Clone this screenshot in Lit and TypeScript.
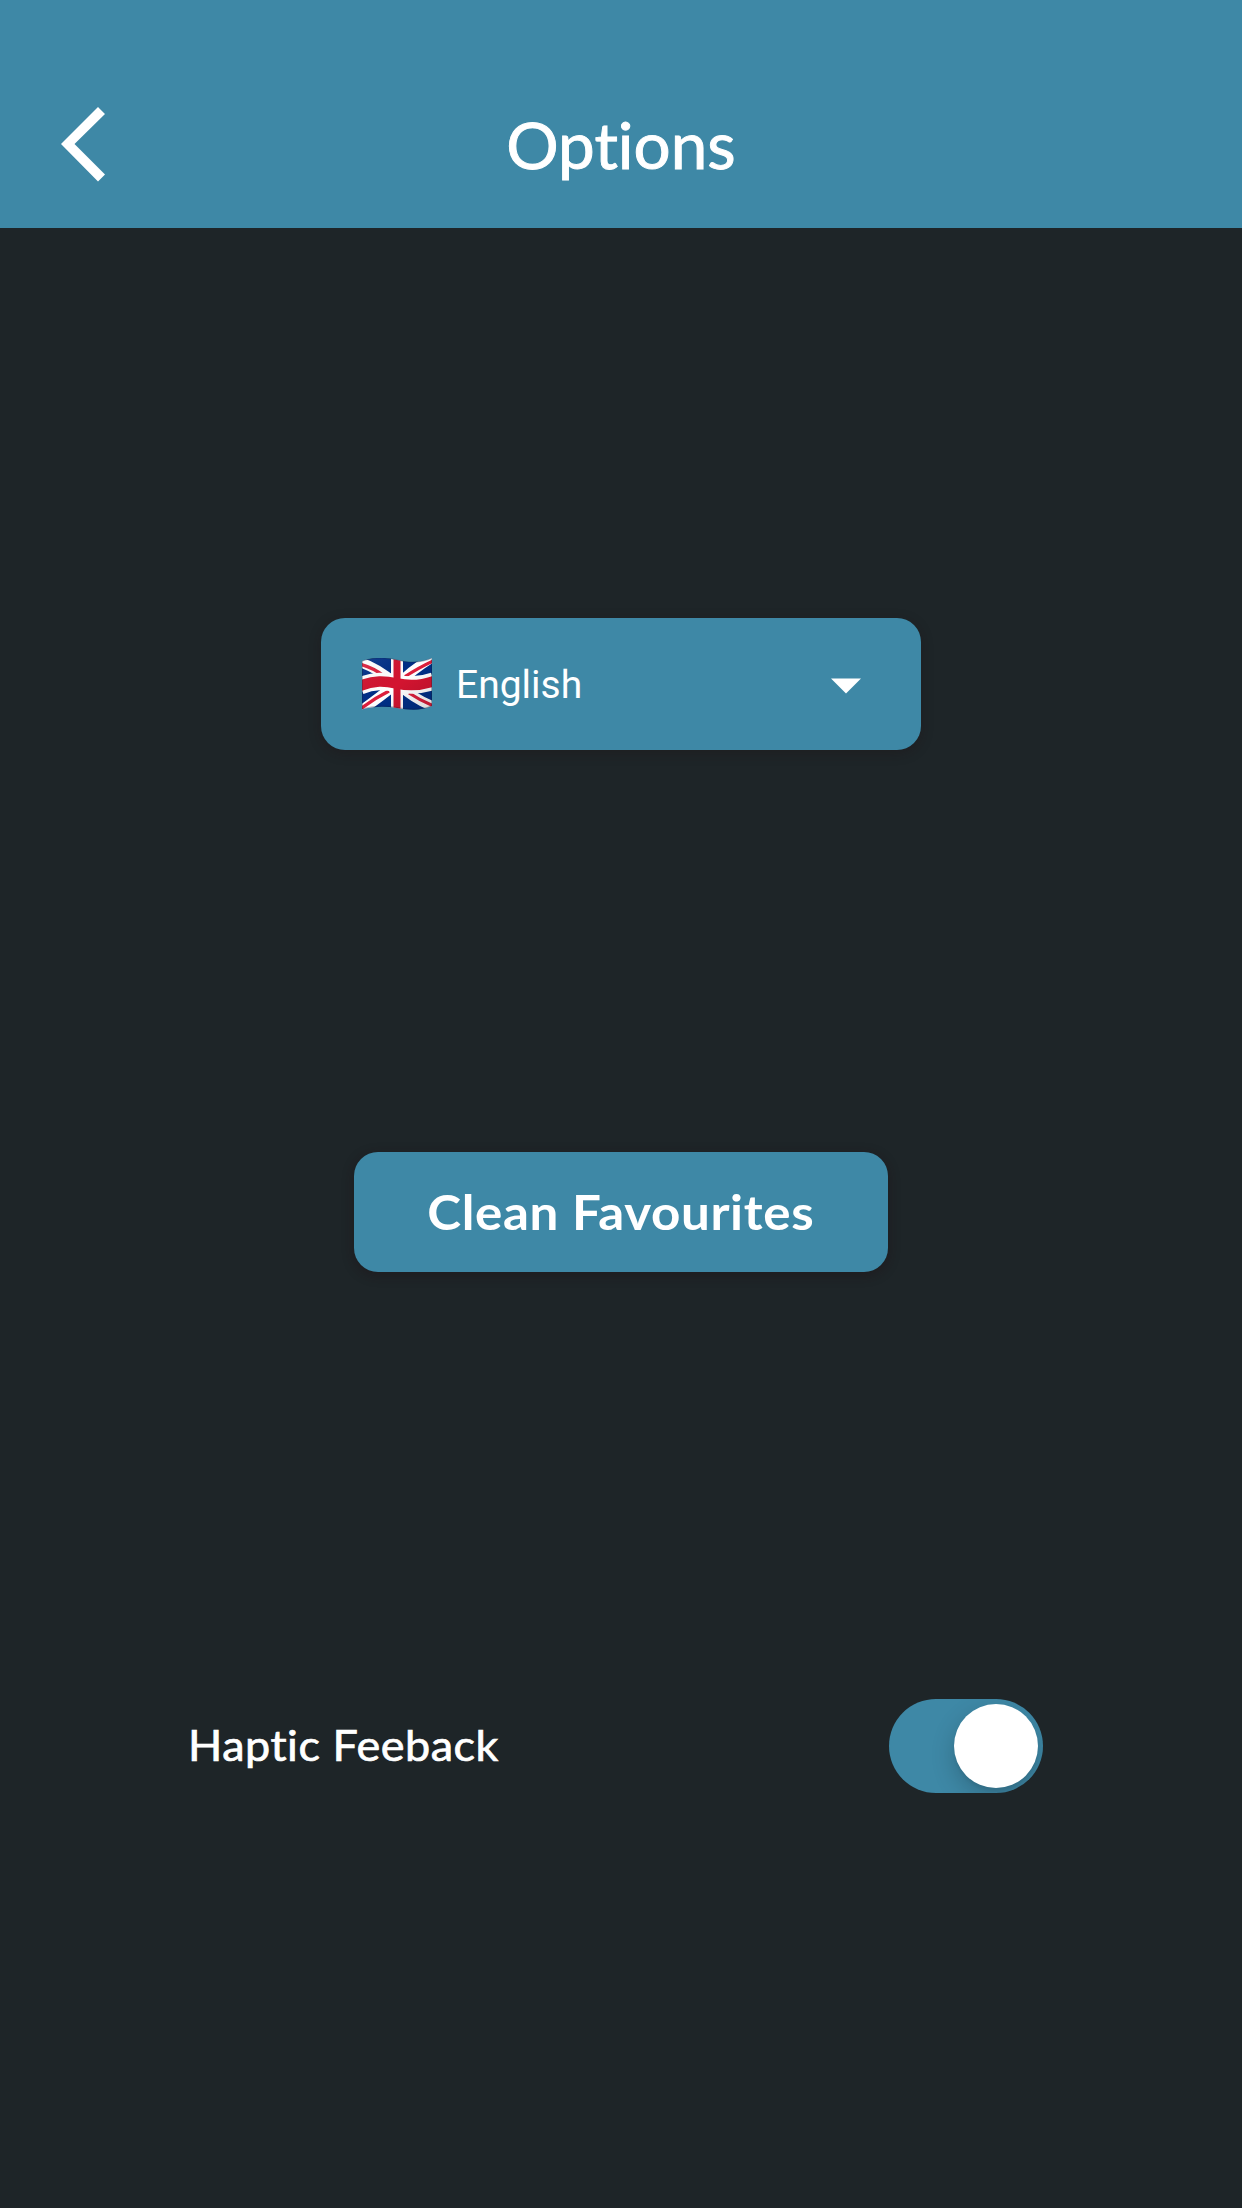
import { LitElement, html, css, svg } from "lit";
import { customElement, state } from "lit/decorators.js";

const flag = svg`
  <defs>
    <clipPath id="cloth"><path d="M0 3C12-1 23-1 35 2S58 5 70 0V48C58 53 47 52 35 50S12 48 0 51.500Z"/></clipPath>
    <linearGradient id="shade" x1="0" y1="0" x2="1" y2="1">
      <stop offset="0" stop-color="#fff" stop-opacity=".1"/>
      <stop offset=".5" stop-color="#000" stop-opacity="0"/>
      <stop offset="1" stop-color="#000" stop-opacity=".16"/>
    </linearGradient>
  </defs>
  <g clip-path="url(#cloth)">
    <path fill="#002f87" d="M-1-2H71V54H-1Z"/>
    <path stroke="#fff" stroke-width="10" fill="none" d="M-3 4Q14 9 33 25M73-2Q55 8 37 25M-3 54Q14 42 33 27M73 49Q55 43 37 27"/>
    <path stroke="#dc1f3c" stroke-width="3.200" fill="none" d="M-3 6Q10 9 22 18M71 3Q58 9 43 18.500M-1 50.500Q13 40 27 33M72 48Q59 43 47 35"/>
    <path stroke="#fff" stroke-width="17.500" fill="none" d="M-2 28C12 22 23 23 35 25.500S58 28 72 23"/>
    <path fill="#fff" d="M29-2H41V54H29Z"/>
    <path stroke="#d31430" stroke-width="10.500" fill="none" d="M-2 28C12 22 23 23 35 25.500S58 28 72 23"/>
    <path fill="#d31430" d="M31.500-2H38.500V54H31.500Z"/>
    <path fill="url(#shade)" d="M-1-2H71V54H-1Z"/>
  </g>
  <path fill="none" stroke="#123" stroke-opacity=".3" d="M.5 3C12-1 23-1 35 2S58 5 69.500 .5V48C58 52.500 47 51.500 35 49.500S12 47.500 .5 51Z"/>`;

@customElement("app-root")
export class AppRoot extends LitElement {
  @state() private haptic = true;

  static styles = css`
    :host { display: block; font-family: Lato, "Liberation Sans", sans-serif; font-variant-ligatures: none; color: #fff; }
    .page { box-sizing: border-box; width: 100%; height: 2208px; background: #1e2528; display: flex; flex-direction: column; align-items: center; overflow: hidden; }
    .header { box-sizing: border-box; width: 100%; height: 228px; flex: none; background: #3e88a6; display: grid; grid-template-columns: 180px 1fr 180px; align-items: center; padding-top: 60px; }
    button { appearance: none; border: 0; padding: 0; margin: 0; color: inherit; font: inherit; background: none; white-space: nowrap; }
    .back { margin-left: 60px; width: 46px; height: 76px; }
    .back svg, .flag, .caret { display: block; }
    h1 { margin: 1px 0 0; text-align: center; font-size: 63px; line-height: 76px; font-weight: 400; letter-spacing: 0; transform: scaleX(1.04); -webkit-text-stroke: .9px #fff; }
    .select { box-sizing: border-box; margin-top: 390px; width: 600px; height: 132px; padding: 0 60px 0 41px; border-radius: 24px; background: #3e88a6; box-shadow: 0 3px 12px rgba(32, 16, 20, .35); display: flex; align-items: center; }
    .language { font-family: Roboto, sans-serif; font-size: 39px; line-height: 46px; margin: 2px auto 0 24px; }
    .caret { margin-top: 3px; }
    .clean { margin-top: 402px; width: 534px; height: 120px; border-radius: 24px; background: #3e88a6; box-shadow: 0 3px 12px rgba(32, 16, 20, .45); font-size: 48px; font-weight: 700; line-height: 60px; }
    .clean span { display: inline-block; letter-spacing: .6px; transform: scaleX(1.065); }
    .row { margin: 427px 0 0 188px; align-self: flex-start; width: 855px; display: flex; justify-content: space-between; align-items: center; }
    .label { font-size: 42px; line-height: 52px; letter-spacing: .5px; transform: scaleX(1.07); transform-origin: left; margin-top: -3px; -webkit-text-stroke: .7px #fff; }
    .switch { box-sizing: border-box; width: 154px; height: 94px; border-radius: 47px; padding: 5px; background: #3e88a6; display: flex; justify-content: flex-start; overflow: hidden; }
    .switch.on { justify-content: flex-end; }
    .knob { width: 84px; height: 84px; border-radius: 50%; background: #fff; box-shadow: 0 9px 24px rgba(0, 0, 0, .2), 0 3px 3px rgba(0, 0, 0, .06); }
  `;

  render() {
    return html`
      <main class="page">
        <header class="header">
          <button class="back" aria-label="Back">
            <svg width="46" height="76" viewBox="0 0 46 76"><path fill="#fff" d="M38 1 45 8 14.500 38 45 68.500 38 75.500 1 38Z"/></svg>
          </button>
          <h1>Options</h1>
        </header>
        <button class="select">
          <svg class="flag" width="70" height="52" viewBox="0 0 70 52">${flag}</svg>
          <span class="language">English</span>
          <svg class="caret" width="30" height="16" viewBox="0 0 30 16"><path fill="#fff" d="M0 .5H30L15 15.500Z"/></svg>
        </button>
        <button class="clean"><span>Clean Favourites</span></button>
        <div class="row">
          <span class="label">Haptic Feeback</span>
          <button class="switch ${this.haptic ? "on" : ""}" role="switch" aria-label="Haptic Feeback" aria-checked=${this.haptic}
            @click=${() => (this.haptic = !this.haptic)}><span class="knob"></span></button>
        </div>
      </main>`;
  }
}
